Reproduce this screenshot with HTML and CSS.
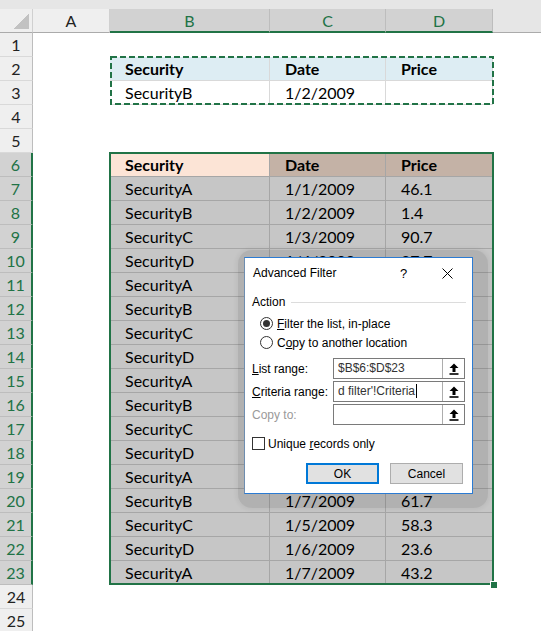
FILE: index.html
```html
<!DOCTYPE html>
<html>
  <head>
    <title>Advanced Filter</title>
    <link rel="stylesheet" href="styles.css">
  </head>
  <body>
    <div class="sheet">
      <div class="row head">
        <div class="corner"><span class="tri"></span></div>
        <div class="ch">A</div>
        <div class="ch on">B</div>
        <div class="ch on">C</div>
        <div class="ch on">D</div>
        <div class="ch rest"></div>
      </div>

      <div class="row"><div class="rn">1</div><div></div><div></div><div></div><div></div><div></div></div>
      <div class="row"><div class="rn">2</div><div></div><div class="c t th">Security</div><div class="c t th">Date</div><div class="c t th">Price</div><div></div></div>
      <div class="row"><div class="rn">3</div><div></div><div class="c t">SecurityB</div><div class="c t">1/2/2009</div><div class="c t"></div><div></div></div>
      <div class="row"><div class="rn">4</div><div></div><div></div><div></div><div></div><div></div></div>
      <div class="row"><div class="rn">5</div><div></div><div></div><div></div><div></div><div></div></div>

      <div class="row"><div class="rn on">6</div><div></div><div class="c s act">Security</div><div class="c s hd">Date</div><div class="c s hd">Price</div><div></div></div>
      <div class="row"><div class="rn on">7</div><div></div><div class="c s">SecurityA</div><div class="c s">1/1/2009</div><div class="c s">46.1</div><div></div></div>
      <div class="row"><div class="rn on">8</div><div></div><div class="c s">SecurityB</div><div class="c s">1/2/2009</div><div class="c s">1.4</div><div></div></div>
      <div class="row"><div class="rn on">9</div><div></div><div class="c s">SecurityC</div><div class="c s">1/3/2009</div><div class="c s">90.7</div><div></div></div>
      <div class="row"><div class="rn on">10</div><div></div><div class="c s">SecurityD</div><div class="c s">1/4/2009</div><div class="c s">27.7</div><div></div></div>
      <!-- rows 11-19: the dialog covers columns C and D -->
      <div class="row"><div class="rn on">11</div><div></div><div class="c s">SecurityA</div><div class="c s"></div><div class="c s"></div><div></div></div>
      <div class="row"><div class="rn on">12</div><div></div><div class="c s">SecurityB</div><div class="c s"></div><div class="c s"></div><div></div></div>
      <div class="row"><div class="rn on">13</div><div></div><div class="c s">SecurityC</div><div class="c s"></div><div class="c s"></div><div></div></div>
      <div class="row"><div class="rn on">14</div><div></div><div class="c s">SecurityD</div><div class="c s"></div><div class="c s"></div><div></div></div>
      <div class="row"><div class="rn on">15</div><div></div><div class="c s">SecurityA</div><div class="c s"></div><div class="c s"></div><div></div></div>
      <div class="row"><div class="rn on">16</div><div></div><div class="c s">SecurityB</div><div class="c s"></div><div class="c s"></div><div></div></div>
      <div class="row"><div class="rn on">17</div><div></div><div class="c s">SecurityC</div><div class="c s"></div><div class="c s"></div><div></div></div>
      <div class="row"><div class="rn on">18</div><div></div><div class="c s">SecurityD</div><div class="c s"></div><div class="c s"></div><div></div></div>
      <div class="row"><div class="rn on">19</div><div></div><div class="c s">SecurityA</div><div class="c s"></div><div class="c s"></div><div></div></div>
      <div class="row"><div class="rn on">20</div><div></div><div class="c s">SecurityB</div><div class="c s">1/7/2009</div><div class="c s">61.7</div><div></div></div>
      <div class="row"><div class="rn on">21</div><div></div><div class="c s">SecurityC</div><div class="c s">1/5/2009</div><div class="c s">58.3</div><div></div></div>
      <div class="row"><div class="rn on">22</div><div></div><div class="c s">SecurityD</div><div class="c s">1/6/2009</div><div class="c s">23.6</div><div></div></div>
      <div class="row"><div class="rn on">23</div><div></div><div class="c s">SecurityA</div><div class="c s">1/7/2009</div><div class="c s">43.2</div><div></div></div>

      <div class="row"><div class="rn">24</div><div></div><div></div><div></div><div></div><div></div></div>
      <div class="row"><div class="rn">25</div><div></div><div></div><div></div><div></div><div></div></div>

      <!-- criteria range marching ants -->
      <svg class="ants" width="384" height="49">
        <rect x="1" y="1" width="382" height="47" fill="none" stroke="#217346" stroke-width="2" stroke-dasharray="6 3"/>
      </svg>

      <!-- list range selection -->
      <div class="selbox"></div>
      <div class="handle"></div>

      <div class="dlg-shadow"></div>
      <div class="dlg">
        <div class="dlg-title">
          <span class="dlg-name">Advanced Filter</span>
          <span class="help">?</span>
          <svg class="close" width="11" height="11" viewBox="0 0 11 11">
            <path d="M0.5 0.5 L10.5 10.5 M10.5 0.5 L0.5 10.5" stroke="#000" stroke-width="1"/>
          </svg>
        </div>

        <div class="group"><span>Action</span><i class="rule"></i></div>
        <div class="opt first"><span class="radio on"></span><span><u>F</u>ilter the list, in-place</span></div>
        <div class="opt"><span class="radio"></span><span>C<u>o</u>py to another location</span></div>

        <div class="fields">
          <span class="lbl"><u>L</u>ist range:</span>
          <div class="ref">
            <span class="val">$B$6:$D$23</span>
            <span class="pick"><svg width="10" height="12" viewBox="0 0 10 12"><path d="M5 0.5 L9.5 5 H6.5 V9 H3.5 V5 H0.5 Z" fill="#000"/><rect x="0.5" y="10.2" width="9" height="1.6" fill="#000"/></svg></span>
          </div>
          <span class="lbl"><u>C</u>riteria range:</span>
          <div class="ref">
            <span class="val">d filter'!Criteria<i class="caret"></i></span>
            <span class="pick"><svg width="10" height="12" viewBox="0 0 10 12"><path d="M5 0.5 L9.5 5 H6.5 V9 H3.5 V5 H0.5 Z" fill="#000"/><rect x="0.5" y="10.2" width="9" height="1.6" fill="#000"/></svg></span>
          </div>
          <span class="lbl off">Copy to:</span>
          <div class="ref">
            <span class="val"></span>
            <span class="pick"><svg width="10" height="12" viewBox="0 0 10 12"><path d="M5 0.5 L9.5 5 H6.5 V9 H3.5 V5 H0.5 Z" fill="#000"/><rect x="0.5" y="10.2" width="9" height="1.6" fill="#000"/></svg></span>
          </div>
        </div>

        <div class="chk"><span class="box"></span><span>Unique <u>r</u>ecords only</span></div>

        <div class="btns">
          <button class="btn ok">OK</button>
          <button class="btn">Cancel</button>
        </div>
      </div>
    </div>
  </body>
</html>
```

FILE: styles.css
```css
body {
  margin: 0;
  background-color: #fff;
  font-family: Lato, "Liberation Sans", sans-serif;
  font-size: 16px;
  color: #000;
}

.sheet {
  position: relative;
  width: 541px;
  height: 631px;
  overflow: hidden;
}

.row {
  display: grid;
  grid-template-columns: 33px 77px 160px 116px 107px 1fr;
  height: 24px;
}

/* column headers */
.head {
  height: 33px;
  padding-top: 9px;
  box-sizing: border-box;
  background-color: #e6e6e6;
}

.corner,
.ch {
  box-sizing: border-box;
  height: 24px;
  background-color: #efefef;
  border-right: 1px solid #d0d0d0;
  border-bottom: 1px solid #ababab;
  text-align: center;
  line-height: 23px;
  color: #222;
}

.corner {
  position: relative;
}

.tri {
  position: absolute;
  right: 3px;
  bottom: 3px;
  width: 15px;
  height: 15px;
  background: linear-gradient(to bottom right, transparent 50%, #c2c2c2 50%);
}

.ch.on {
  background-color: #d2d2d2;
  color: #217346;
  border-bottom: 2px solid #217346;
  border-right-color: #bdbdbd;
}

.ch.rest {
  background-color: #e6e6e6;
  border-right: none;
}

/* row headers */
.rn {
  box-sizing: border-box;
  background-color: #efefef;
  border-right: 1px solid #bdbdbd;
  border-bottom: 1px solid #d9d9d9;
  text-align: center;
  line-height: 23px;
  color: #222;
}

.rn.on {
  background-color: #d2d2d2;
  color: #217346;
  border-right: 2px solid #217346;
  border-bottom-color: #bdbdbd;
}

/* cells */
.c {
  box-sizing: border-box;
  padding-left: 15px;
  line-height: 23px;
  white-space: nowrap;
  overflow: hidden;
}

.t {
  border-right: 1px solid #d9d9d9;
  border-bottom: 1px solid #d9d9d9;
}

.th {
  background-color: #ddedf3;
  font-weight: bold;
}

.s {
  background-color: #c6c6c6;
  border-right: 1px solid #a6a6a6;
  border-bottom: 1px solid #a6a6a6;
}

.s.act {
  background-color: #fce4d6;
  font-weight: bold;
}

.s.hd {
  background-color: #c4b2a6;
  font-weight: bold;
}

.ants {
  position: absolute;
  left: 110px;
  top: 56px;
}

.selbox {
  position: absolute;
  left: 109px;
  top: 152px;
  width: 385px;
  height: 433px;
  box-sizing: border-box;
  border: 2px solid #217346;
}

.handle {
  position: absolute;
  left: 490px;
  top: 581px;
  width: 6px;
  height: 6px;
  background-color: #217346;
  border: 1px solid #fff;
  border-width: 1px 0 0 1px;
}

/* dialog */
.dlg-shadow {
  position: absolute;
  left: 238px;
  top: 250px;
  width: 250px;
  height: 258px;
  border-radius: 14px;
  background-color: rgba(0, 0, 0, 0.1);
  box-shadow: 0 0 4px 2px rgba(0, 0, 0, 0.05);
}

.dlg {
  position: absolute;
  left: 244px;
  top: 257px;
  width: 229px;
  height: 237px;
  box-sizing: border-box;
  background-color: #fff;
  border: 1px solid #2b7bd3;
  border-left-color: #6e8db0;
  font-family: "Liberation Sans", sans-serif;
  font-size: 12px;
  color: #000;
}

.dlg-title {
  display: flex;
  align-items: center;
  height: 30px;
  padding-left: 8px;
}

.dlg-name {
  width: 147px;
}

.help {
  width: 42px;
  font-size: 13px;
}

.group {
  display: flex;
  align-items: center;
  height: 16px;
  margin-top: 6px;
  padding-left: 7px;
  padding-right: 6px;
}

.rule {
  flex: 1;
  height: 1px;
  margin-left: 6px;
  background-color: #dcdcdc;
}

.opt {
  display: flex;
  align-items: center;
  height: 19px;
  padding-left: 15px;
}

.opt.first {
  margin-top: 4px;
}

.radio {
  position: relative;
  width: 13px;
  height: 13px;
  box-sizing: border-box;
  border: 1px solid #333;
  border-radius: 50%;
  margin-right: 4px;
}

.radio.on::after {
  content: "";
  position: absolute;
  left: 2px;
  top: 2px;
  width: 7px;
  height: 7px;
  border-radius: 50%;
  background-color: #333;
}

.fields {
  display: grid;
  grid-template-columns: 81px 132px;
  grid-auto-rows: 21px;
  row-gap: 2px;
  align-items: center;
  margin-top: 6px;
  padding-left: 7px;
}

.lbl.off {
  color: #9a9a9a;
}

.ref {
  display: flex;
  height: 21px;
  box-sizing: border-box;
  border: 1px solid #7a7a7a;
  background-color: #fff;
}

.val {
  flex: 1;
  padding-left: 4px;
  line-height: 19px;
  color: #333;
  white-space: nowrap;
  overflow: hidden;
}

.caret {
  display: inline-block;
  width: 1px;
  height: 14px;
  margin-left: 1px;
  vertical-align: -3px;
  background-color: #000;
}

.pick {
  display: flex;
  align-items: center;
  justify-content: center;
  width: 21px;
  border-left: 1px solid #adadad;
}

.chk {
  display: flex;
  align-items: center;
  height: 13px;
  margin-top: 12px;
  padding-left: 7px;
}

.box {
  width: 13px;
  height: 13px;
  box-sizing: border-box;
  border: 1px solid #333;
  margin-right: 3px;
}

.btns {
  display: flex;
  gap: 11px;
  margin-top: 13px;
  padding-left: 61px;
}

.btn {
  width: 73px;
  height: 21px;
  box-sizing: border-box;
  background-color: #e1e1e1;
  border: 1px solid #adadad;
  font-family: "Liberation Sans", sans-serif;
  font-size: 12px;
  color: #000;
  padding: 0;
}

.btn.ok {
  border: 2px solid #0078d7;
}
```
